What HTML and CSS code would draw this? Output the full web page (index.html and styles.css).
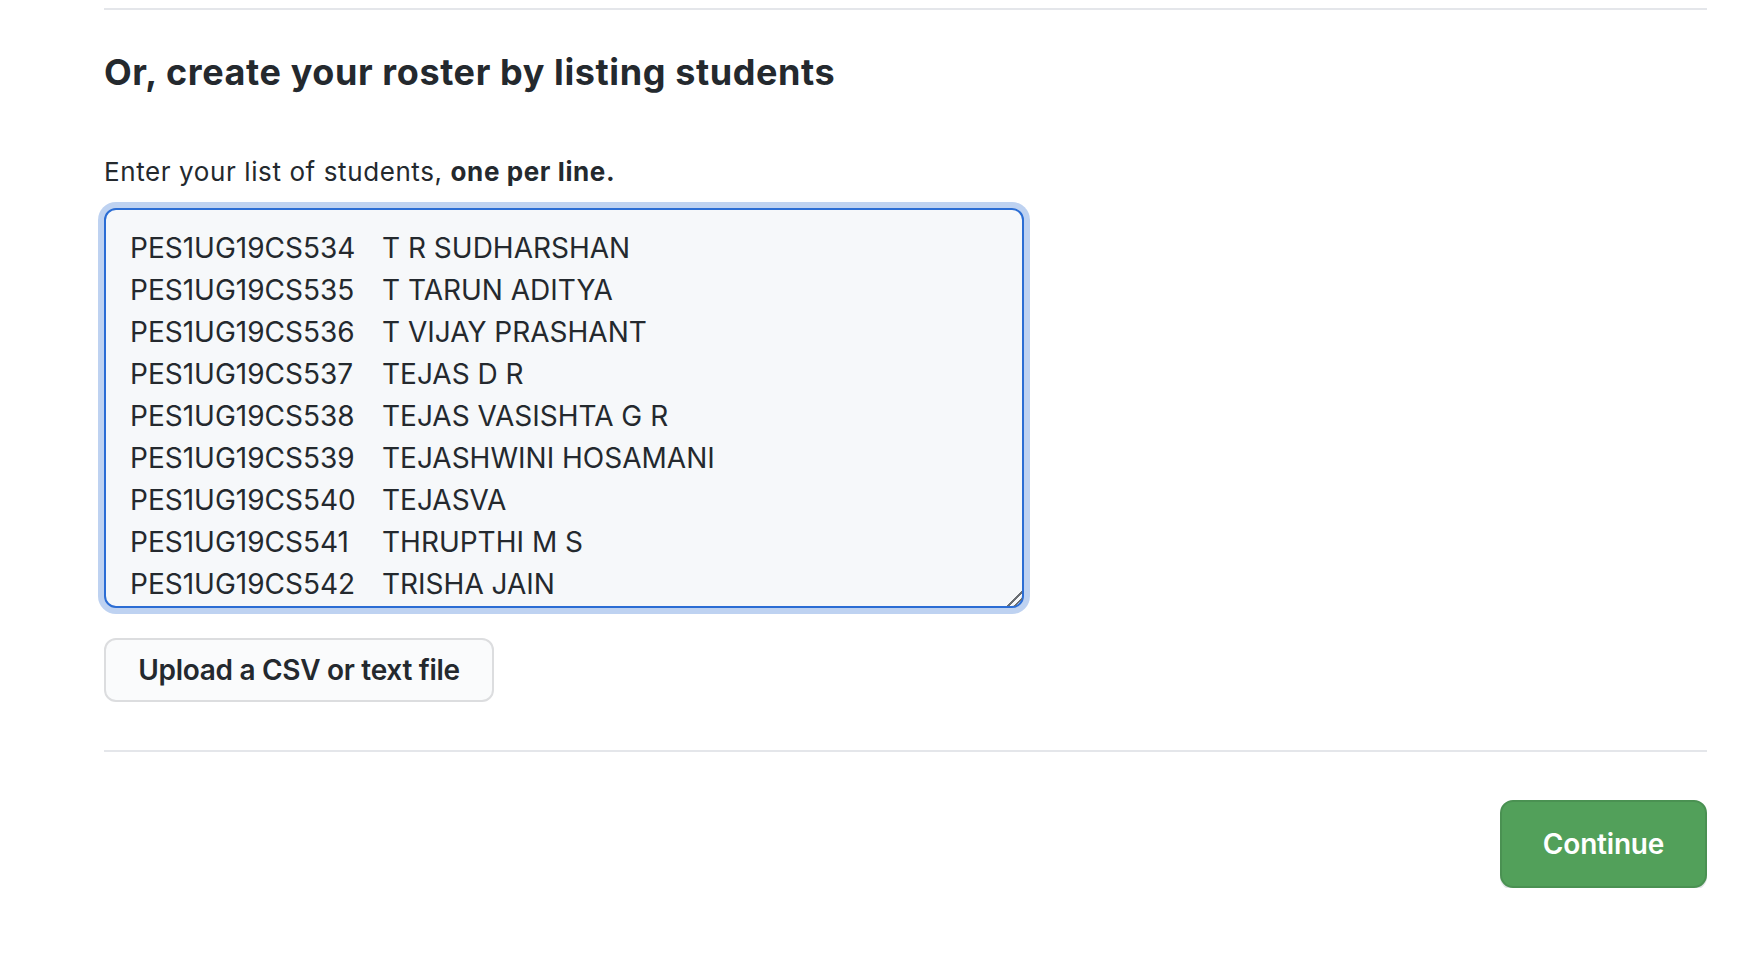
FILE: index.html
```html
<!DOCTYPE html>
<html lang="en">
<head>
<meta charset="utf-8">
<title>Create roster</title>
<link rel="stylesheet" href="styles.css">
</head>
<body>
<div class="page">
  <hr class="rule rule-top">
  <h2 class="title">Or, create your roster by listing students</h2>
  <p class="label">Enter your list of students, <strong>one per line.</strong></p>
  <textarea class="roster" spellcheck="false">PES1UG19CS534	T R SUDHARSHAN
PES1UG19CS535	T TARUN ADITYA
PES1UG19CS536	T VIJAY PRASHANT
PES1UG19CS537	TEJAS D R
PES1UG19CS538	TEJAS VASISHTA G R
PES1UG19CS539	TEJASHWINI HOSAMANI
PES1UG19CS540	TEJASVA
PES1UG19CS541	THRUPTHI M S
PES1UG19CS542	TRISHA JAIN</textarea>
  <button class="btn btn-upload" type="button">Upload a CSV or text file</button>
  <hr class="rule rule-bottom">
  <div class="actions">
    <button class="btn btn-continue" type="button">Continue</button>
  </div>
</div>
</body>
</html>
```
FILE: styles.css
```css
html, body {
  margin: 0;
  padding: 0;
  background: #ffffff;
}

body {
  font-family: Inter, "Liberation Sans", Arial, sans-serif;
  color: #24292e;
}

.page {
  margin: 0 49px 0 104px;
  padding-top: 8px;
}

.rule {
  border: 0;
  height: 2px;
  background: #e4e6ea;
  margin: 0;
}

.title {
  margin: 40px 0 0;
  font-size: 36px;
  line-height: 45px;
  font-weight: 700;
  letter-spacing: 0.6px;
}

.label {
  margin: 57px 0 0;
  font-size: 26px;
  line-height: 39px;
  font-weight: 400;
  letter-spacing: 0.6px;
}

.label strong {
  font-weight: 700;
}

.roster {
  display: block;
  box-sizing: border-box;
  margin: 17px 0 0;
  width: 920px;
  height: 400px;
  padding: 17px 24px 0;
  font-family: Inter, "Liberation Sans", Arial, sans-serif;
  font-size: 28px;
  line-height: 42px;
  color: #24292e;
  background: #f6f8fa;
  border: 2px solid #2b6dd4;
  border-radius: 12px;
  box-shadow: 0 0 0 6px #bed2f1;
  outline: none;
  overflow: hidden;
  resize: both;
  tab-size: 8;
}

.roster::-webkit-resizer {
  background:
    linear-gradient(135deg, transparent 0 46%, #6a6e73 46% 54%, transparent 54% 66%, #6a6e73 66% 74%, transparent 74%);
  background-size: 16px 16px;
  background-repeat: no-repeat;
  background-position: 0 0;
}

.btn {
  font-family: Inter, "Liberation Sans", Arial, sans-serif;
  cursor: pointer;
  box-sizing: border-box;
}

.btn-upload {
  display: block;
  margin: 30px 0 0;
  width: 390px;
  height: 64px;
  padding: 0;
  font-size: 28px;
  font-weight: 600;
  letter-spacing: -0.3px;
  color: #24292e;
  background: #fafbfc;
  border: 2px solid #dcdddf;
  border-radius: 12px;
}

.rule-bottom {
  margin-top: 48px;
}

.actions {
  display: flex;
  justify-content: flex-end;
  margin-top: 48px;
}

.btn-continue {
  width: 207px;
  height: 88px;
  padding: 0;
  font-size: 28px;
  font-weight: 600;
  letter-spacing: -0.2px;
  color: #ffffff;
  background: #52a05a;
  border: 2px solid #4a9152;
  border-radius: 13px;
  box-shadow: 0 2px 0 #e3e5e8;
}
```
